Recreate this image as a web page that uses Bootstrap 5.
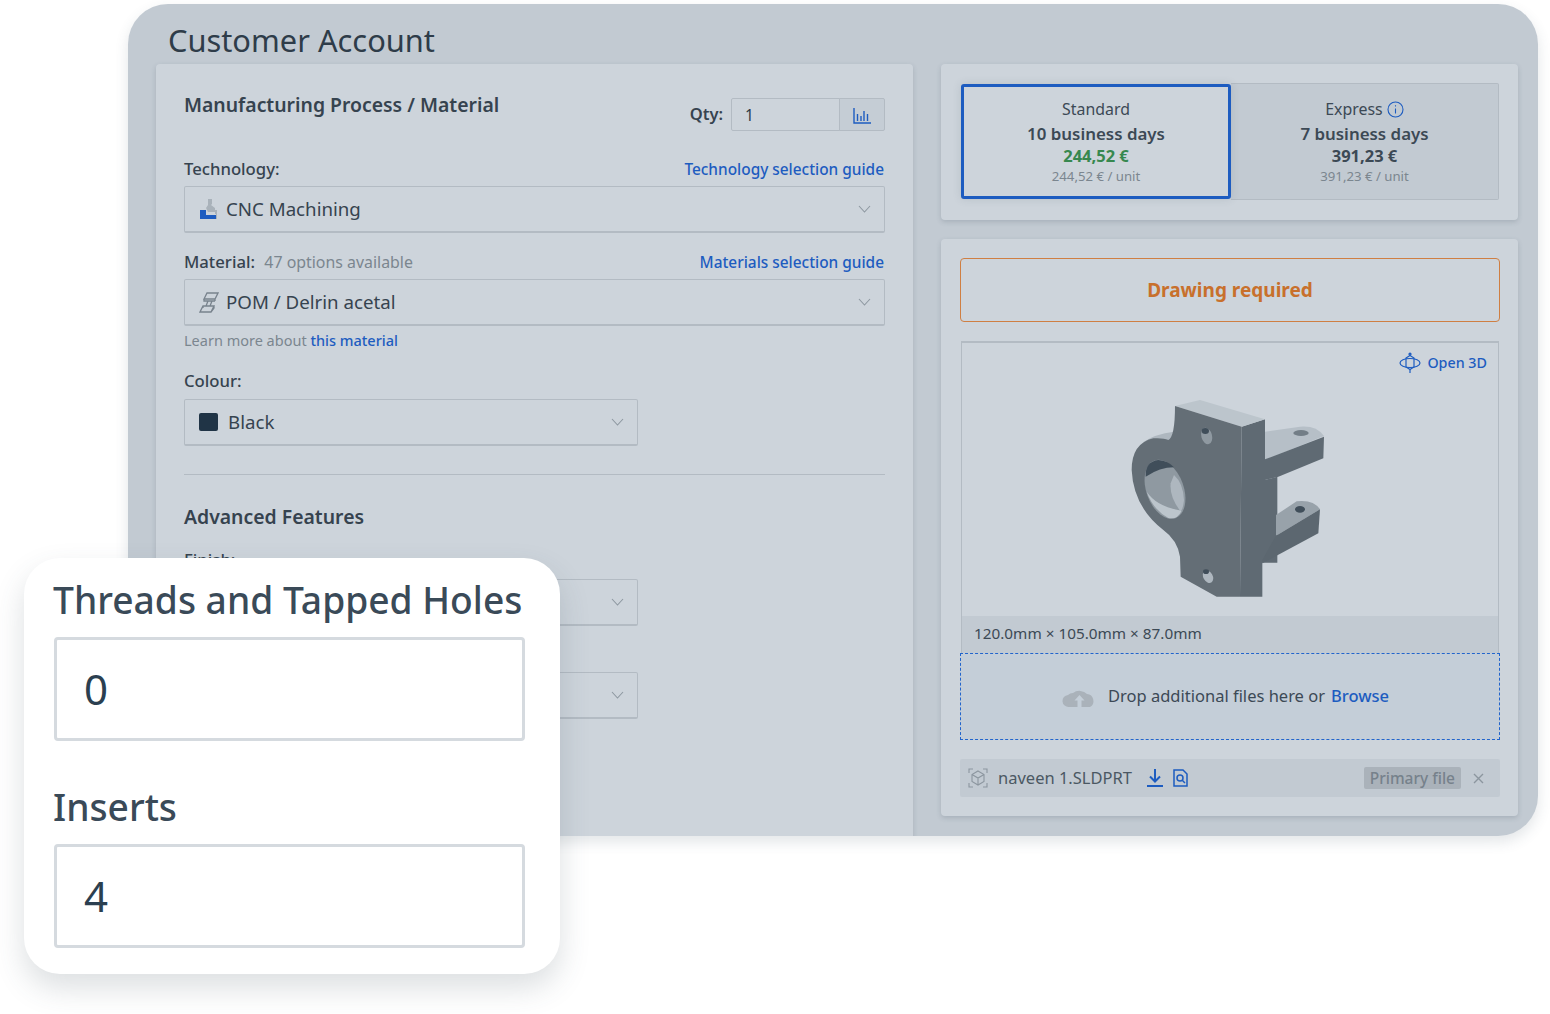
<!DOCTYPE html>
<html lang="en">
<head>
    <title>Customer Account</title>
    <meta name="viewport" content="width=device-width, initial-scale=1.0">
    <link href="https://cdn.jsdelivr.net/npm/bootstrap@5.3.0/dist/css/bootstrap.min.css" rel="stylesheet">
    <style>
        body {
            background: #fff;
            font-family: "Noto Sans", "Liberation Sans", sans-serif;
            color: #2e3c49;
            min-height: 1014px;
            position: relative;
            overflow: hidden;
        }
        .app-window {
            width: 1410px;
            height: 832px;
            margin: 4px 0 0 128px;
            padding-left: 28px;
            background: #c2cad2;
            border-radius: 40px;
            box-shadow: 0 6px 14px rgba(60, 75, 90, .14);
            overflow: hidden;
        }
        .app-title {
            font-size: 30.8px;
            line-height: 40px;
            height: 60px;
            padding: 16px 0 0 12px;
            margin: 0;
            font-weight: 400;
            color: #2e3c49;
        }
        .main-row { column-gap: 28px; }
        .panel-box {
            background: #cdd4db;
            border: 0;
            border-radius: 4px;
            box-shadow: 0 2px 5px rgba(60, 75, 90, .2);
        }
        .left-panel {
            width: 757px;
            height: 800px;
            padding: 28px 28px 0 28px;
        }
        .right-col { width: 577px; }
        .section-title {
            font-size: 19.4px;
            line-height: 26px;
            font-weight: 600;
            margin: 0;
            color: #36434f;
        }
        .qty-label { font-size: 16.5px; font-weight: 600; color: #36434f; }
        .qty-group { width: 154px; height: 33px; }
        .qty-group .form-control {
            background: transparent;
            border: 1px solid #b3bbc3;
            border-radius: 2px 0 0 2px;
            font-size: 15.5px;
            padding: 0 13px;
            color: #2e3c49;
            height: 33px;
        }
        .qty-btn {
            width: 46px;
            background: #c5cdd5;
            border: 1px solid #b3bbc3;
            border-radius: 0 2px 2px 0;
            padding: 0;
        }
        .field-label {
            font-size: 16.7px;
            line-height: 24px;
            font-weight: 500;
            color: #36434f;
        }
        .field-hint { font-size: 15.9px; font-weight: 400; color: #7b868f; margin-left: 5px; }
        .guide-link, .blue-link { color: #1d5cc0; text-decoration: none; font-weight: 500; }
        .guide-link { font-size: 15.4px; line-height: 20px; padding: 2px 1px 0 0; }
        .fake-select {
            height: 47px;
            background: transparent;
            border: 1px solid #b3bbc3;
            border-bottom-width: 2px;
            border-radius: 2px;
            padding: 0 13px 0 14px;
            font-size: 18.7px;
            color: #36434f;
        }
        .fake-select .sel-arrow { margin-left: auto; }
        .select-half { width: 454px; }
        .swatch { width: 19px; height: 18px; background: #203446; border-radius: 2px; margin-right: 2px; }
        .learn-more { font-size: 14.5px; line-height: 20px; color: #7b868f; margin-top: 4px; margin-bottom: 1px; }
        .divider { border-top: 1px solid #b3bbc3; margin: 28px 0 29px; opacity: 1; }

        .speed-toggle { height: 117px; }
        .speed-opt {
            flex: 1;
            text-align: center;
            padding-top: 13px;
            background: #c2cad2;
            border: 1px solid #b3bbc3;
            border-left: 0;
            border-radius: 0 2px 2px 0;
            color: #3c4955;
        }
        .speed-opt.is-active {
            background: #cdd4db;
            border: 3px solid #1d5cc0;
            border-radius: 3px;
            padding-top: 10px;
            box-shadow: 0 0 8px rgba(60, 75, 90, .15);
            margin: 1px 0;
            flex: 0 0 270px;
            position: relative;
        }
        .opt-name { font-size: 15.9px; line-height: 24px; margin-bottom: 2px; display: flex; justify-content: center; align-items: center; gap: 4px; }
        .opt-days { font-size: 16.9px; line-height: 22px; font-weight: 600; }
        .opt-price { font-size: 16.5px; line-height: 22px; font-weight: 700; }
        .opt-price.is-best { color: #37884f; }
        .opt-unit { font-size: 13.2px; line-height: 18px; color: #7b868f; }

        .drawing-alert {
            height: 64px;
            border: 1.5px solid #cf7f43;
            border-radius: 4px;
            color: #c8702c;
            font-size: 19px;
            font-weight: 700;
        }
        .viewer-box {
            height: 276px;
            margin: 19px 1px 0;
            border: 1px solid #b3bbc3;
            border-top-width: 2px;
            border-bottom: 0;
            position: relative;
        }
        .open-3d {
            position: absolute;
            top: 9px;
            right: 11px;
            font-size: 14.3px;
            gap: 6px;
        }
        .part-img { margin-top: 37px; }
        .size-strip {
            height: 37px;
            margin: 0 1px;
            background: #c2cad2;
            border: 1px solid #b3bbc3;
            border-width: 0 1px;
            padding: 0 0 2px 12px;
            font-size: 15.3px;
            color: #3c4955;
        }
        .drop-zone {
            height: 87px;
            background: #c4ced8;
            border: 1px dashed #2265cc;
            padding-right: 9px;
            font-size: 16.5px;
            color: #3c4955;
        }
        .file-row {
            height: 38px;
            margin-top: 19px;
            background: #c2cad2;
            border-radius: 2px;
            padding: 0 16px 0 8px;
            font-size: 16.5px;
            color: #4b5863;
        }
        .primary-tag {
            background: #aab2ba;
            color: #76818b;
            font-size: 15.5px;
            font-weight: 500;
            line-height: 22px;
            padding: 0 6px;
            border-radius: 2px;
        }

        .float-card {
            position: absolute;
            left: 24px;
            top: 558px;
            width: 536px;
            height: 416px;
            background: #fff;
            border-radius: 36px;
            padding: 16px 35px 0 29px;
            box-shadow: 0 14px 30px rgba(60, 75, 90, .18);
        }
        .float-label {
            font-size: 37.2px;
            line-height: 52px;
            font-weight: 500;
            color: #3a4a58;
            margin: 0 0 11px;
            white-space: nowrap;
        }
        .float-input {
            width: 471px;
            height: 104px;
            margin: 0 0 40px 1px;
            border: 3px solid #d5dadf;
            border-radius: 4px;
            font-size: 42px;
            padding: 0 27px 1px;
            color: #2b3f50;
        }
    </style>
</head>
<body>
    <div class="app-window">
        <h1 class="app-title">Customer Account</h1>
        <div class="d-flex align-items-start main-row">
            <!-- left form -->
            <div class="card panel-box left-panel flex-shrink-0">
                <div class="d-flex justify-content-between align-items-start" style="margin-bottom:26px">
                    <h2 class="section-title">Manufacturing Process / Material</h2>
                    <div class="d-flex align-items-center gap-2" style="margin-top:6px">
                        <span class="qty-label">Qty:</span>
                        <div class="input-group qty-group">
                            <input class="form-control" value="1">
                            <button class="btn qty-btn" type="button">
                                <svg width="18" height="16" viewBox="0 0 18 16" fill="none" stroke="#1d5cc0" stroke-width="1.4"><path d="M1 0v15h17M4.500 6v7M8 8v5M11 3v10M14.500 6v7"/></svg>
                            </button>
                        </div>
                    </div>
                </div>

                <div class="d-flex justify-content-between align-items-center field-label" style="margin-bottom:5px">
                    <span>Technology:</span>
                    <a href="#" class="guide-link">Technology selection guide</a>
                </div>
                <div class="fake-select d-flex align-items-center" style="gap:7px">
                    <svg width="20" height="22" viewBox="0 0 20 22"><path d="M9 1h4v5l-1 1 4 3v4h-7l-2-4 2-3z" fill="#a9b2ba"/><path d="M1 12h6v5h10v4H1z" fill="#1d5cc0"/><path d="M16 12h2v9h-1v-5h-1z" fill="#a9b2ba"/></svg>
                    <span>CNC Machining</span>
                    <svg class="sel-arrow" width="13" height="8" viewBox="0 0 13 8" fill="none" stroke="#8e98a1" stroke-width="1.1"><path d="M1 1l5.500 6L12 1"/></svg>
                </div>

                <div class="d-flex justify-content-between align-items-center field-label" style="margin:17px 0 5px">
                    <span>Material: <span class="field-hint">47 options available</span></span>
                    <a href="#" class="guide-link">Materials selection guide</a>
                </div>
                <div class="fake-select d-flex align-items-center" style="gap:7px">
                    <svg width="20" height="21" viewBox="0 0 20 21" fill="none" stroke="#78838d" stroke-width="1.3"><path d="M8 1h11l-3 6H5zM5 7v2l11 0M16 7v2M4 14h11l-3 6H1zM4 14v2M9 9l-2 5M13 9l-2 5M12 20l3-4v-2"/></svg>
                    <span>POM / Delrin acetal</span>
                    <svg class="sel-arrow" width="13" height="8" viewBox="0 0 13 8" fill="none" stroke="#8e98a1" stroke-width="1.1"><path d="M1 1l5.500 6L12 1"/></svg>
                </div>
                <div class="learn-more">Learn more about <a href="#" class="blue-link">this material</a></div>

                <div class="field-label" style="margin:18px 0 6px">Colour:</div>
                <div class="fake-select select-half d-flex align-items-center gap-2">
                    <span class="swatch"></span>
                    <span>Black</span>
                    <svg class="sel-arrow" width="13" height="8" viewBox="0 0 13 8" fill="none" stroke="#8e98a1" stroke-width="1.1"><path d="M1 1l5.500 6L12 1"/></svg>
                </div>

                <div class="divider"></div>

                <h2 class="section-title">Advanced Features</h2>
                <div class="field-label" style="margin:18px 0 7px">Finish:</div>
                <div class="fake-select select-half d-flex align-items-center">
                    <svg class="sel-arrow" width="13" height="8" viewBox="0 0 13 8" fill="none" stroke="#8e98a1" stroke-width="1.1"><path d="M1 1l5.500 6L12 1"/></svg>
                </div>
                <div class="field-label" style="margin:15px 0 7px">&nbsp;</div>
                <div class="fake-select select-half d-flex align-items-center">
                    <svg class="sel-arrow" width="13" height="8" viewBox="0 0 13 8" fill="none" stroke="#8e98a1" stroke-width="1.1"><path d="M1 1l5.500 6L12 1"/></svg>
                </div>
            </div>

            <!-- right column -->
            <div class="right-col d-flex flex-column" style="gap:19px">
                <div class="card panel-box" style="padding:19px 19px 20px 20px">
                    <div class="speed-toggle d-flex">
                        <div class="speed-opt is-active">
                            <div class="opt-name">Standard</div>
                            <div class="opt-days">10 business days</div>
                            <div class="opt-price is-best">244,52 €</div>
                            <div class="opt-unit">244,52 € / unit</div>
                        </div>
                        <div class="speed-opt">
                            <div class="opt-name">Express
                                <svg width="17" height="17" viewBox="0 0 17 17" fill="none" stroke="#1d5cc0" stroke-width="1.1"><circle cx="8.500" cy="8.500" r="7.500"/><path d="M8.500 7.500v5M8.500 4.200v1.400"/></svg>
                            </div>
                            <div class="opt-days">7 business days</div>
                            <div class="opt-price">391,23 €</div>
                            <div class="opt-unit">391,23 € / unit</div>
                        </div>
                    </div>
                </div>

                <div class="card panel-box" style="padding:19px 18px 19px 19px;height:577px">
                    <div class="drawing-alert d-flex align-items-center justify-content-center">Drawing required</div>

                    <div class="viewer-box">
                        <a href="#" class="open-3d blue-link d-flex align-items-center">
                            <svg width="22" height="22" viewBox="0 0 22 22" fill="none" stroke="#1d5cc0" stroke-width="1.2"><ellipse cx="11" cy="11" rx="10" ry="4.500"/><path d="M7 6l4-2.500L15 6v9l-4 2.500L7 15z"/><path d="M11 1v3M11 17.500V21M9.500 2.500L11 1l1.500 1.500"/></svg>
                            <span>Open 3D</span>
                        </a>
                        <svg class="part-img d-block mx-auto" width="250" height="230" viewBox="15 0 750 690">
                            <!-- upper arm -->
                            <path d="M495 155L600 140Q650 136 672 168L495 240Z" fill="#b6bfc7"/>
                            <path d="M495 238L672 170L670 235L535 290L495 300Z" fill="#5f6a73"/>
                            <!-- column side -->
                            <path d="M425 140L495 118V300L532 290V548L487 548V650H420Z" fill="#5f6a73"/>
                            <!-- lower arm -->
                            <path d="M528 467V405L590 364Q640 358 660 388Z" fill="#98a2aa"/>
                            <path d="M528 467L660 388L655 460L487 550V540Z" fill="#5c6770"/>
                            <!-- top face -->
                            <path d="M225 78L300 60L495 118L425 140Z" fill="#bcc5cc"/>
                            <path d="M130 186Q165 162 222 155L212 182Q170 170 130 186Z" fill="#aeb7bf"/>
                            <!-- front face -->
                            <path d="M225 78L425 140L420 650H350L242 590L240 530Q232 480 190 450Q100 380 95 270Q95 190 160 175Q190 173 205 180Q225 170 225 78Z" fill="#646e76"/>
                            <!-- bore -->
                            <ellipse cx="195" cy="328" rx="56" ry="92" transform="rotate(-20 195 328)" fill="#8f99a1"/>
                            <path d="M137 290Q135 245 175 240Q205 242 222 262Q180 262 137 290Z" fill="#404e5a"/>
                            <path d="M222 285Q250 310 252 360Q248 395 240 392Q208 350 212 310Z" fill="#aeb7bf"/>
                            <path d="M140 335Q170 380 245 392Q232 420 205 414Q160 390 140 335Z" fill="#bcc5cc"/>
                            <!-- small holes -->
                            <ellipse cx="320" cy="168" rx="16" ry="25" transform="rotate(-15 320 168)" fill="#8f99a1"/>
                            <ellipse cx="316" cy="153" rx="11" ry="9" fill="#404e5a"/>
                            <ellipse cx="324" cy="590" rx="14" ry="20" transform="rotate(-30 324 590)" fill="#aeb7bf"/>
                            <ellipse cx="318" cy="575" rx="9" ry="7" fill="#404e5a"/>
                            <ellipse cx="603" cy="159" rx="23" ry="9" fill="#737e87"/>
                            <ellipse cx="600" cy="388" rx="15" ry="10" fill="#404e5a"/>
                        </svg>
                    </div>
                    <div class="size-strip d-flex align-items-center">120.0mm × 105.0mm × 87.0mm</div>
                    <div class="drop-zone d-flex align-items-center justify-content-center">
                        <svg width="35" height="22" viewBox="0 0 35 22" style="margin-right:11px"><path d="M7 21a6 6 0 0 1-1-12 7 7 0 0 1 5-2 9 7 0 0 1 14 1 7 7 0 0 1 3 13z" fill="#aab2ba"/><path d="M17.500 9l5 5.500h-3V21h-4v-6.500h-3z" fill="#c4ced8"/></svg>
                        <span>Drop additional files here or</span>
                        <a href="#" class="blue-link" style="margin-left:6px">Browse</a>
                    </div>
                    <div class="file-row d-flex align-items-center">
                        <svg width="20" height="20" viewBox="0 0 20 20" fill="none" stroke="#8c969f" stroke-width="1.100"><path d="M10 3l6 3.500v7L10 17l-6-3.500v-7zM4 6.500L10 10l6-3.500M10 10v7"/><path d="M1 5V1h4M15 1h4v4M19 15v4h-4M5 19H1v-4"/></svg>
                        <span style="margin-left:10px">naveen 1.SLDPRT</span>
                        <svg width="16" height="18" viewBox="0 0 16 18" fill="none" stroke="#1d5cc0" stroke-width="2" style="margin-left:15px"><path d="M8 0v12M3 7.500l5 5 5-5M0 17h16"/></svg>
                        <svg width="15" height="18" viewBox="0 0 15 18" fill="none" stroke="#1d5cc0" stroke-width="1.500" style="margin-left:10px"><path d="M1 1h9l4 4v12H1z"/><circle cx="7" cy="9" r="3"/><path d="M9.500 11.500l2.500 2.500"/></svg>
                        <span class="primary-tag ms-auto">Primary file</span>
                        <svg width="11" height="11" viewBox="0 0 11 11" fill="none" stroke="#8c969f" stroke-width="1.400" style="margin-left:12px"><path d="M1 1l9 9M10 1l-9 9"/></svg>
                    </div>
                </div>
            </div>
        </div>
    </div>

    <!-- floating card over the form -->
    <div class="float-card">
        <p class="float-label">Threads and Tapped Holes</p>
        <input class="form-control float-input" value="0">
        <p class="float-label">Inserts</p>
        <input class="form-control float-input" value="4">
    </div>

    <script src="https://cdn.jsdelivr.net/npm/bootstrap@5.3.0/dist/js/bootstrap.bundle.min.js"></script>
</body>
</html>
